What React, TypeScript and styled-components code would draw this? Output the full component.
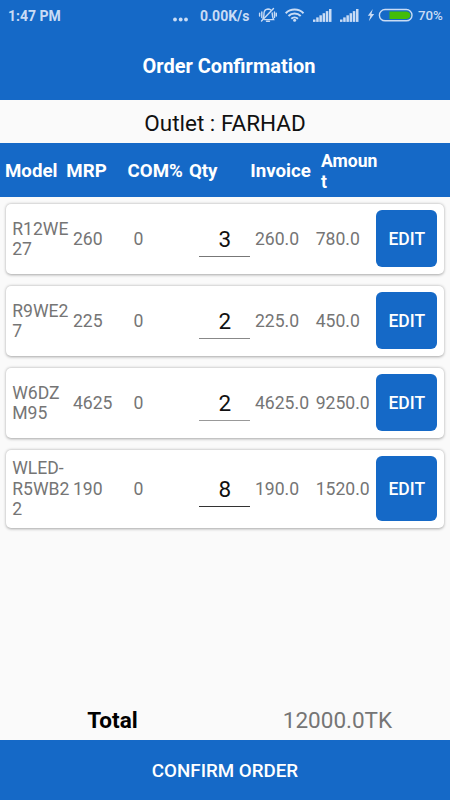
import React from "react";
import styled, { createGlobalStyle } from "styled-components";

const BLUE = "#1569c7";
const STATUS = "#c9dcf5";

const GlobalStyle = createGlobalStyle`
  * { box-sizing: border-box; }
  body { margin: 0; background: #fafafa; font-family: Roboto, sans-serif; }
`;

const Screen = styled.div`
  width: 450px;
  height: 800px;
  display: flex;
  flex-direction: column;
  background: #fafafa;
  overflow: hidden;
`;

const StatusBar = styled.div`
  height: 31px;
  flex: none;
  display: flex;
  align-items: center;
  padding: 0 7px 0 8px;
  background: ${BLUE};
  color: ${STATUS};
  font-size: 14px;
  line-height: 16px;
  font-weight: 700;
`;

const Clock = styled.span`
  margin-right: auto;
`;

const StatusIcons = styled.svg`
  flex: none;
  display: block;
`;

const Speed = styled.span`
  width: 52px;
  margin: 0 6px 0 12px;
  font-size: 14px;
  white-space: nowrap;
`;

const Percent = styled.span`
  width: 25px;
  margin-left: 5px;
  font-size: 13.3px;
  font-weight: 500;
  white-space: nowrap;
`;

const TitleBar = styled.header`
  height: 69px;
  flex: none;
  display: flex;
  align-items: center;
  justify-content: center;
  padding: 1px 0 0 8px;
  background: ${BLUE};
  color: #fff;
  font-size: 20px;
  font-weight: 700;
`;

const Outlet = styled.div`
  height: 43px;
  flex: none;
  display: flex;
  align-items: center;
  justify-content: center;
  padding-top: 2px;
  color: #111;
  font-size: 22.5px;
`;

const TableHead = styled.div`
  height: 54px;
  flex: none;
  display: grid;
  grid-template-columns: 61.3px 61.3px 61.3px 61.3px 61.3px 72px;
  align-items: center;
  padding-left: 5px;
  background: ${BLUE};
  color: #fff;
  font-size: 18.7px;
  line-height: 20.5px;
  font-weight: 700;
`;

const HeadCell = styled.div<{ $narrow?: boolean }>`
  margin-left: ${(p) => (p.$narrow ? 9.5 : 0)}px;
  padding-top: 3px;
  font-size: ${(p) => (p.$narrow ? 17.6 : 18.7)}px;
  white-space: nowrap;
`;

const List = styled.div`
  flex: 1;
  display: flex;
  flex-direction: column;
  gap: 12px;
  padding: 6.5px 6px 0;
`;

const Card = styled.div<{ $tall?: boolean }>`
  height: ${(p) => (p.$tall ? 78 : 70)}px;
  display: grid;
  grid-template-columns: repeat(7, 60.7px);
  align-items: center;
  padding: 0 6.2px;
  background: #fff;
  border-radius: 5px;
  box-shadow: 0 0.5px 3px rgba(0, 0, 0, 0.34);
`;

const Cell = styled.div`
  color: #757575;
  font-size: 17.6px;
  line-height: 20.5px;
  padding-top: 1.4px;
`;

const Model = styled(Cell)`
  white-space: pre;
`;

const Qty = styled.div<{ $ink: string }>`
  justify-self: end;
  width: 51px;
  height: 36px;
  margin-right: 4.6px;
  border-bottom: 1px solid ${(p) => p.$ink};
  color: #111;
  font-size: 22.5px;
  line-height: 36px;
  text-align: center;
`;

const EditButton = styled.button<{ $tall?: boolean }>`
  width: 61px;
  height: ${(p) => (p.$tall ? 64.5 : 57)}px;
  padding: 1px 0 0;
  border: 0;
  border-radius: 6px;
  background: ${BLUE};
  color: #fff;
  font: 500 17.5px Roboto, sans-serif;
`;

const TotalRow = styled.div`
  height: 40px;
  flex: none;
  display: grid;
  grid-template-columns: 1fr 1fr;
  align-items: center;
  text-align: center;
  font-size: 22.5px;
`;

const TotalLabel = styled.div`
  color: #000;
  font-weight: 700;
`;

const TotalValue = styled.div`
  color: #757575;
`;

const Confirm = styled.button`
  height: 60px;
  flex: none;
  border: 0;
  padding: 2px 0 0;
  background: ${BLUE};
  color: #fff;
  font: 500 18.75px Roboto, sans-serif;
`;

const rows = [
  { model: "R12WE\n27", mrp: "260", com: "0", qty: "3", invoice: "260.0", amount: "780.0", ink: "#777" },
  { model: "R9WE2\n7", mrp: "225", com: "0", qty: "2", invoice: "225.0", amount: "450.0", ink: "#888" },
  { model: "W6DZ\nM95", mrp: "4625", com: "0", qty: "2", invoice: "4625.0", amount: "9250.0", ink: "#999" },
  { model: "WLED-\nR5WB2\n2", mrp: "190", com: "0", qty: "8", invoice: "190.0", amount: "1520.0", ink: "#333", tall: true },
];

const Dots = () => (
  <StatusIcons width="16" height="16" viewBox="0 0 16 16" fill={STATUS}>
    <circle cx="3" cy="11.5" r="1.9" />
    <circle cx="8.7" cy="11.5" r="1.9" />
    <circle cx="14" cy="11.5" r="1.9" />
  </StatusIcons>
);

/* Muted bell, wifi, two signal meters, charging bolt and battery. */
const Indicators = () => (
  <StatusIcons width="155" height="31" viewBox="258 0 155 31" fill="none" stroke={STATUS}>
    <g strokeWidth="1.4" strokeLinecap="round">
      <path d="M263 18.5 C264.2 17 263.8 15 264 13 C264.3 10.5 265.8 9.2 268 9 C269.3 9 270 9.3 270.9 10 M272.2 13 C272.3 15.5 272.2 17 273.6 19.6 H264.6" />
      <path d="M266.5 21.2 H269.5 M261.5 21 L273.5 8.5" />
      <path d="M261.8 12 V17.5 M259.6 13.3 V16 M274.5 12 V17.5 M276.3 13.3 V16" />
    </g>
    <g strokeWidth="2">
      <path d="M285.7 13.2 A12.8 12.8 0 0 1 303.5 13.2" />
      <path d="M288.5 16 A8.8 8.8 0 0 1 300.7 16" />
      <path d="M291.3 18.7 A4.8 4.8 0 0 1 297.9 18.7" />
    </g>
    <circle cx="294.6" cy="20.2" r="1.5" fill={STATUS} stroke="none" />
    <g fill={STATUS} stroke="none">
      {[313, 340].map((x) =>
        [0, 1, 2, 3, 4, 5].map((i) => (
          <rect key={`${x}-${i}`} x={x + i * 3.2} y={19.5 - i * 2.1} width="2.5" height={2.4 + i * 2.1} />
        ))
      )}
      <path d="M372.8 9 L367.8 15.8 H370.4 L368.8 21.2 L374.2 14 H371.4 Z" />
    </g>
    <rect x="379.4" y="9.5" width="32.6" height="11.3" rx="5.65" strokeWidth="1.4" />
    <path d="M389.5 11.4 H406.5 Q410.3 11.8 410.3 15.15 Q410.3 18.5 406.5 18.9 H389.5 Z" fill="#43bd08" stroke="none" />
  </StatusIcons>
);

export default function App() {
  return (
    <>
      <GlobalStyle />
      <Screen>
        <StatusBar>
          <Clock>1:47 PM</Clock>
          <Dots />
          <Speed>0.00K/s</Speed>
          <Indicators />
          <Percent>70%</Percent>
        </StatusBar>
        <TitleBar>Order Confirmation</TitleBar>
        <Outlet>Outlet : FARHAD</Outlet>
        <TableHead>
          <HeadCell>Model</HeadCell>
          <HeadCell>MRP</HeadCell>
          <HeadCell>COM%</HeadCell>
          <HeadCell>Qty</HeadCell>
          <HeadCell>Invoice</HeadCell>
          <HeadCell $narrow>Amoun<br />t</HeadCell>
        </TableHead>
        <List>
          {rows.map((r) => (
            <Card key={r.model} $tall={r.tall}>
              <Model>{r.model}</Model>
              <Cell>{r.mrp}</Cell>
              <Cell>{r.com}</Cell>
              <Qty $ink={r.ink}>{r.qty}</Qty>
              <Cell>{r.invoice}</Cell>
              <Cell>{r.amount}</Cell>
              <EditButton $tall={r.tall}>EDIT</EditButton>
            </Card>
          ))}
        </List>
        <TotalRow>
          <TotalLabel>Total</TotalLabel>
          <TotalValue>12000.0TK</TotalValue>
        </TotalRow>
        <Confirm>CONFIRM ORDER</Confirm>
      </Screen>
    </>
  );
}
